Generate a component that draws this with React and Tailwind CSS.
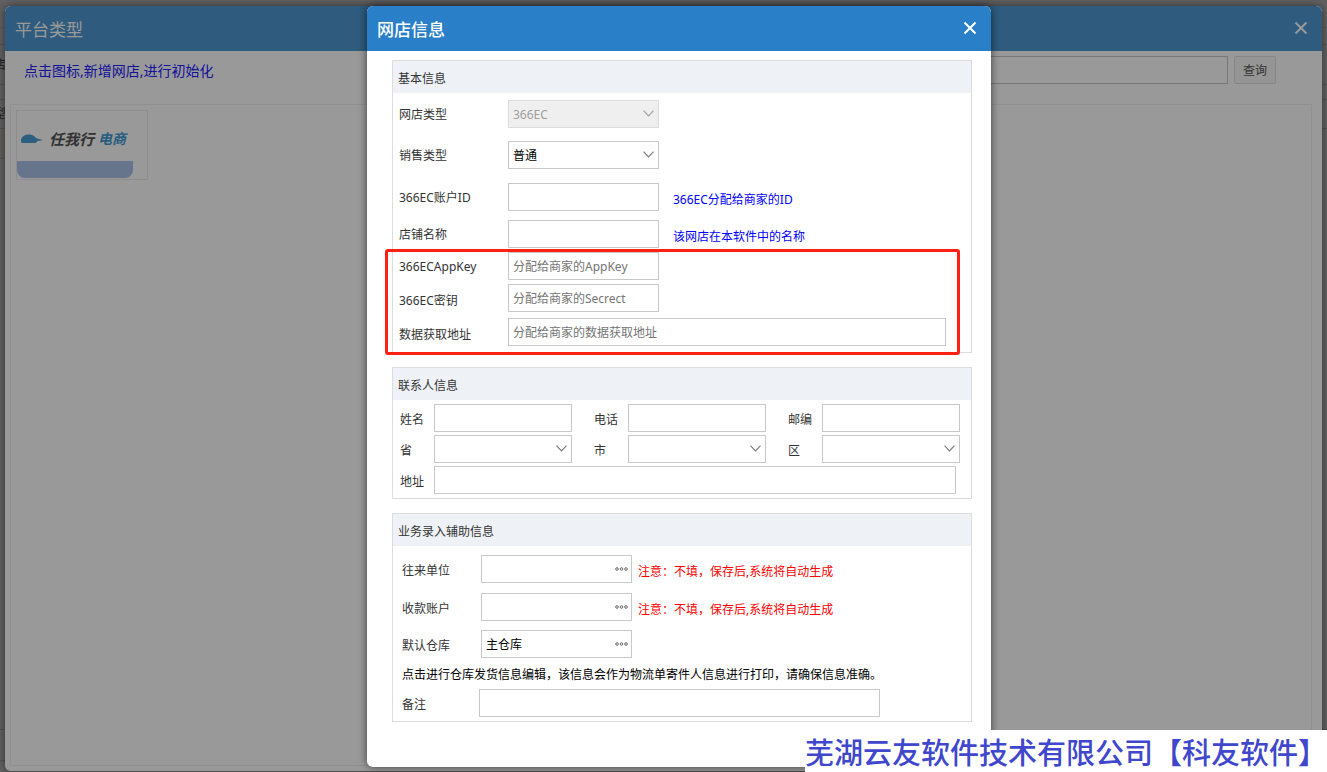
import { useState } from 'react';
import clsx from 'clsx';

const BASIC_FIELDS = [
  { id: 'shopType', label: '网店类型', type: 'select', value: '366EC', disabled: true, row: 'mt-[7px]' },
  { id: 'saleType', label: '销售类型', type: 'select', value: '普通', row: 'mt-[13px]' },
  { id: 'accountId', label: '366EC账户ID', hint: '366EC分配给商家的ID', row: 'mt-[14px]' },
  { id: 'shopName', label: '店铺名称', hint: '该网店在本软件中的名称', row: 'mt-[9px]' },
  { id: 'appKey', label: '366ECAppKey', placeholder: '分配给商家的AppKey', row: 'mt-1' },
  { id: 'secret', label: '366EC密钥', placeholder: '分配给商家的Secrect', row: 'mt-1', low: true },
  { id: 'dataUrl', label: '数据获取地址', placeholder: '分配给商家的数据获取地址', row: 'mt-[6px]', wide: true, low: true },
];

const CONTACT_FIELDS = [
  { id: 'name', label: '姓名' },
  { id: 'phone', label: '电话' },
  { id: 'zip', label: '邮编' },
  { id: 'province', label: '省', select: true },
  { id: 'city', label: '市', select: true },
  { id: 'district', label: '区', select: true },
];

const AUTO_NOTE = '注意：不填，保存后,系统将自动生成';

const ASSIST_FIELDS = [
  { id: 'partner', label: '往来单位', note: AUTO_NOTE, row: 'mt-[9px]' },
  { id: 'account', label: '收款账户', note: AUTO_NOTE, row: 'mt-[10px]' },
  { id: 'warehouse', label: '默认仓库', value: '主仓库', row: 'mt-[9px]' },
];

const inputClass =
  'block h-7 border border-[#c8c8c8] bg-white px-1 text-xs text-black outline-none placeholder:text-[#757575] placeholder:opacity-100';

function CloseIcon() {
  return (
    <svg width="14" height="14" viewBox="0 0 14 14" fill="none" stroke="currentColor" strokeWidth="2">
      <path d="M1.500 1.500 12.500 12.500M12.500 1.500 1.500 12.500" />
    </svg>
  );
}

function DialogHeader({ title, className }) {
  return (
    <div className={clsx('flex h-[45px] shrink-0 items-center justify-between pl-[10px] pr-[14px] text-white', className)}>
      <h2 className="pt-0.5 text-[17px] leading-6">{title}</h2>
      <button type="button" aria-label="关闭" className="pb-0.5">
        <CloseIcon />
      </button>
    </div>
  );
}

function Select({ id, value = '', disabled, className }) {
  return (
    <div className={clsx('relative', className)}>
      <select
        id={id}
        disabled={disabled}
        defaultValue={value}
        className={clsx(
          'block h-7 w-full appearance-none border px-1 pt-0.5 text-xs outline-none disabled:opacity-100',
          disabled ? 'border-[#dcdcdc] bg-[#efefef] text-[#a0a0a0]' : 'border-[#c8c8c8] bg-white text-black'
        )}
      >
        <option value={value}>{value}</option>
      </select>
      <svg
        className={clsx('pointer-events-none absolute right-[5px] top-[10px]', disabled ? 'text-[#a0a0a0]' : 'text-[#777]')}
        width="11"
        height="7"
        viewBox="0 0 11 7"
        fill="none"
        stroke="currentColor"
        strokeWidth="1.1"
      >
        <path d="M.5.7 5.5 5.9 10.5.7" />
      </svg>
    </div>
  );
}

function LookupInput({ id, value = '' }) {
  const [text, setText] = useState(value);
  return (
    <div className="relative w-[151px]">
      <input id={id} value={text} onChange={(e) => setText(e.target.value)} className={clsx(inputClass, 'w-full')} />
      <button type="button" aria-label="选择" className="absolute right-1 top-3">
        <svg width="13" height="4" viewBox="0 0 13 4" fill="none" stroke="#666" strokeWidth="1" className="block">
          <circle cx="2" cy="2" r="1.3" />
          <circle cx="6.5" cy="2" r="1.3" />
          <circle cx="11" cy="2" r="1.3" />
        </svg>
      </button>
    </div>
  );
}

function Panel({ title, className, children }) {
  return (
    <section className={clsx('border border-[#dcdcdc]', className)}>
      <h3 className="h-8 bg-[#eef2f6] pl-[5px] pt-0.5 text-xs leading-8">{title}</h3>
      {children}
    </section>
  );
}

function ShopDialog() {
  return (
    <div className="relative w-[624px] rounded-md bg-white pb-[45px] text-xs text-[#333] shadow-[0_0_8px_rgba(0,0,0,0.6)]">
      <DialogHeader title="网店信息" className="rounded-t-md bg-[#2a80c8] font-medium" />
      <form className="pl-[25px] pr-[19px] pt-[9px]">
        <Panel title="基本信息" className="pb-[6px]">
          {BASIC_FIELDS.map((f) => (
            <div key={f.id} className={clsx('flex h-7 items-center pl-[6px]', f.row)}>
              <label htmlFor={f.id} className={clsx('w-[109px]', f.low ? 'pt-[6px]' : 'pt-0.5')}>{f.label}</label>
              {f.type === 'select' ? (
                <Select id={f.id} value={f.value} disabled={f.disabled} className="w-[151px]" />
              ) : (
                <input id={f.id} placeholder={f.placeholder} className={clsx(inputClass, f.wide ? 'w-[438px]' : 'w-[151px]')} />
              )}
              {f.hint && <span className="pl-[14px] pt-[6px] text-[#0000ff]">{f.hint}</span>}
            </div>
          ))}
        </Panel>

        <Panel title="联系人信息" className="mt-[14px] pb-1">
          <div className="mt-1 grid grid-cols-[172px_172px_172px] gap-x-[22px] gap-y-[3px] pl-[7px]">
            {CONTACT_FIELDS.map((f) => (
              <div key={f.id} className="flex items-center">
                <label htmlFor={f.id} className="w-[34px] pt-1">{f.label}</label>
                {f.select ? <Select id={f.id} className="w-[138px]" /> : <input id={f.id} className={clsx(inputClass, 'w-[138px]')} />}
              </div>
            ))}
          </div>
          <div className="mt-[3px] flex items-center pl-[7px]">
            <label htmlFor="address" className="w-[34px] pt-1">地址</label>
            <input id="address" className={clsx(inputClass, 'w-[522px]')} />
          </div>
        </Panel>

        <Panel title="业务录入辅助信息" className="mt-[14px] pb-1">
          {ASSIST_FIELDS.map((f) => (
            <div key={f.id} className={clsx('flex h-7 items-center pl-[9px]', f.row)}>
              <label htmlFor={f.id} className="w-[79px] pt-1">{f.label}</label>
              <LookupInput id={f.id} value={f.value} />
              {f.note && <span className="pl-[6px] pt-[6px] text-[#ff0000]">{f.note}</span>}
            </div>
          ))}
          <p className="mt-[7px] pl-[9px] leading-5 text-black">
            点击进行仓库发货信息编辑，该信息会作为物流单寄件人信息进行打印，请确保信息准确。
          </p>
          <div className="mt-1 flex items-center pl-[9px]">
            <label htmlFor="remark" className="w-[77px] pt-1">备注</label>
            <input id="remark" className={clsx(inputClass, 'w-[401px]')} />
          </div>
        </Panel>
      </form>

      {/* highlight around the key fields */}
      <div className="pointer-events-none absolute left-[18px] top-[243px] h-[106px] w-[575px] rounded-[3px] border-3 border-[#ff2013]" />
    </div>
  );
}

function PlatformCard() {
  return (
    <button type="button" className="flex h-[70px] w-[132px] flex-col border border-[#ececec] text-left">
      <span className="flex h-[50px] w-full items-center pl-1 pt-[6px] text-[15px] font-bold italic leading-4">
        <svg width="24" height="10" viewBox="0 0 24 10" className="mr-1 shrink-0">
          <path d="M0 6C1 2 4 .500 8 .500 12 .500 14 3 16 4.500L22 6 16 7.200 15 9H2C0 9 0 8 0 6Z" fill="#4a9fd4" />
        </svg>
        <span className="text-[#555]">任我行</span>
        <span className="pl-1 text-[14px] text-[#3f9bd6]">电商</span>
      </span>
      <span className="h-[17px] w-[116px] rounded-b-lg bg-[#aac3e9]" />
    </button>
  );
}

function PlatformDialog() {
  return (
    <div className="flex h-full flex-col rounded-md bg-white shadow-[0_0_8px_rgba(0,0,0,0.5)]">
      <DialogHeader title="平台类型" className="rounded-t-md bg-[#4d98d2]" />
      <div className="mt-[5px] flex items-center pl-[19px] pr-[46px]">
        <a href="#init" className="pt-0.5 text-sm leading-5 text-[#2020ff]">点击图标,新增网店,进行初始化</a>
        <input aria-label="网店名称" className={clsx(inputClass, 'ml-auto mr-[6px] w-[600px]')} />
        <button type="button" className="h-7 w-[42px] rounded-[2px] border border-[#e0e0e0] bg-[#f8f8f8] pt-0.5 text-xs text-[#555]">
          查询
        </button>
      </div>
      <div className="mb-[5px] ml-[5px] mr-[10px] mt-5 flex-1 border border-[#f0f0f0] p-[5px]">
        <PlatformCard />
      </div>
    </div>
  );
}

// Toolbar and table rows of the page below the dialogs
function PageBackdrop() {
  return (
    <div className="flex h-full flex-col overflow-hidden text-xs text-[#555]">
      <div className="h-7 shrink-0 border-b border-[#eee]" />
      <div className="h-[17px] shrink-0 border-b border-[#ddd]" />
      <div className="flex h-10 w-full shrink-0 items-center border-b border-[#ddd]">
        <span className="flex w-[6px] justify-end overflow-hidden">店</span>
      </div>
      <div className="h-[15px] shrink-0 border-b border-[#ddd]" />
      <div className="flex h-[29px] shrink-0 items-center border-b border-[#ddd]">
        <span className="flex w-[6px] justify-end overflow-hidden">型</span>
      </div>
      <div className="h-[30px] w-1/2 shrink-0 border-b border-[#ddd] bg-[#fffaec]" />
      <div className="flex-1 border-b border-[#ddd]" />
      <div className="h-[31px] shrink-0 border-b border-[#ddd]" />
      <div className="h-[11px] shrink-0" />
    </div>
  );
}

export default function App() {
  return (
    <div className="relative h-screen overflow-hidden bg-white font-['Noto_Sans','Noto_Sans_CJK_SC',sans-serif]">
      <PageBackdrop />
      <div className="absolute inset-0 bg-black/62 px-[5px] pb-px pt-[6px]">
        <div className="relative h-full">
          <PlatformDialog />
          <div className="absolute inset-0 rounded-md bg-black/40" />
        </div>
      </div>
      <div className="absolute inset-0 flex items-start justify-center overflow-auto pl-[31px] pt-[6px]">
        <ShopDialog />
      </div>
      <div className="absolute bottom-0 right-0 h-[42px] whitespace-nowrap bg-white text-[29px] font-medium leading-[46px] text-[#3f48cc]">
        芜湖云友软件技术有限公司【科友软件】
      </div>
    </div>
  );
}
